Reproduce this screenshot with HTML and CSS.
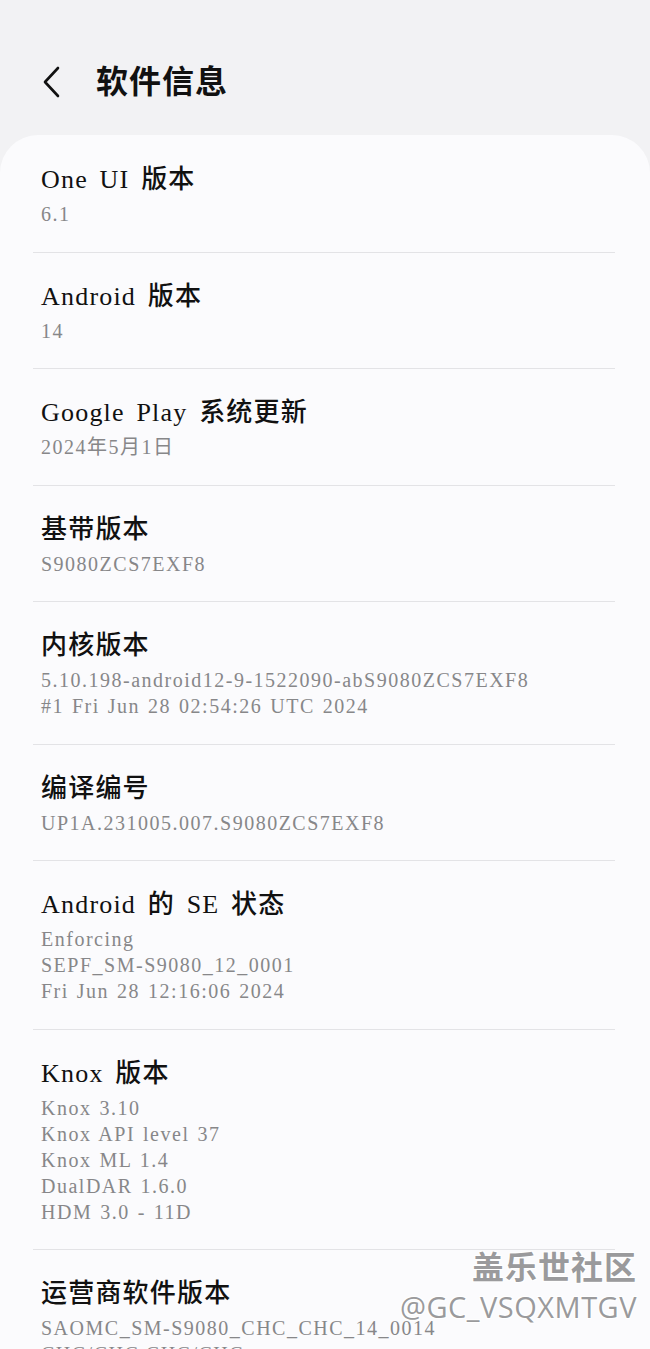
FILE: index.html
```html
<!doctype html>
<html>
<head>
    <meta charset="utf-8">
    <title>软件信息</title>
    <link rel="stylesheet" href="styles.css">
</head>
<body>
    <div class="page">
        <div class="header">
            <svg class="back" width="24" height="34" viewBox="0 0 24 34">
                <path d="M18 3 L5 17 L18 31" fill="none" stroke="#111" stroke-width="2.6" stroke-linecap="round" stroke-linejoin="round"/>
            </svg>
            <h1>软件信息</h1>
        </div>
        <ul class="card">
            <li>
                <p class="name">One UI 版本</p>
                <p class="val">6.1</p>
            </li>
            <li>
                <p class="name">Android 版本</p>
                <p class="val">14</p>
            </li>
            <li>
                <p class="name">Google Play 系统更新</p>
                <p class="val">2024年5月1日</p>
            </li>
            <li>
                <p class="name">基带版本</p>
                <p class="val">S9080ZCS7EXF8</p>
            </li>
            <li>
                <p class="name">内核版本</p>
                <p class="val">5.10.198-android12-9-1522090-abS9080ZCS7EXF8</p>
                <p class="val">#1 Fri Jun 28 02:54:26 UTC 2024</p>
            </li>
            <li>
                <p class="name">编译编号</p>
                <p class="val">UP1A.231005.007.S9080ZCS7EXF8</p>
            </li>
            <li>
                <p class="name">Android 的 SE 状态</p>
                <p class="val">Enforcing</p>
                <p class="val">SEPF_SM-S9080_12_0001</p>
                <p class="val">Fri Jun 28 12:16:06 2024</p>
            </li>
            <li>
                <p class="name">Knox 版本</p>
                <p class="val">Knox 3.10</p>
                <p class="val">Knox API level 37</p>
                <p class="val">Knox ML 1.4</p>
                <p class="val">DualDAR 1.6.0</p>
                <p class="val">HDM 3.0 - 11D</p>
            </li>
            <li>
                <p class="name">运营商软件版本</p>
                <p class="val">SAOMC_SM-S9080_CHC_CHC_14_0014</p>
                <p class="val">CHC/CHC,CHC/CHC</p>
            </li>
        </ul>
        <div class="mark">
            <p class="mark-cn">盖乐世社区</p>
            <p class="mark-id">@GC_VSQXMTGV</p>
        </div>
    </div>
</body>
</html>
```

FILE: styles.css
```css
*{margin:0; padding:0;}
ul{list-style:none;}

html,body{
    background:#f2f2f4;
    overflow:hidden;
}
body{
    font-family:"Liberation Serif","Noto Sans CJK SC",serif;
    color:#111;
}
.page{
    position:relative;
    width:650px;
    height:1349px;
    overflow:hidden;
}

.header{
    display:flex;
    align-items:center;
    height:135px;
    padding:28px 0 0 40px;
    box-sizing:border-box;
}
.header .back{
    margin-right:32px;
}
.header h1{
    font-size:32px;
    font-weight:bold;
    line-height:40px;
    letter-spacing:1px;
}

.card{
    background:#fbfbfd;
    border-radius:38px 38px 0 0;
    padding:1px 35px 0 33px;
}
.card li{
    padding:26px 0 24.5px 8px;
    border-bottom:1px solid #e3e3e6;
}
.card li:last-child{
    border-bottom:none;
}
.card .name{
    font-size:26px;
    font-weight:500;
    line-height:36px;
    letter-spacing:1.2px;
    word-spacing:4px;
    margin-bottom:3px;
    white-space:nowrap;
}
.card .val{
    font-size:20px;
    line-height:26px;
    letter-spacing:1.5px;
    word-spacing:1.5px;
    color:#878789;
    white-space:nowrap;
}

.mark{
    position:absolute;
    right:13px;
    top:1245px;
    text-align:right;
    font-family:"Noto Sans CJK SC","Noto Sans",sans-serif;
    color:#9a9a9c;
    text-shadow:1px 1px 0 #fff, -1px -1px 0 #fff, 1px -1px 0 #fff, -1px 1px 0 #fff;
}
.mark-cn{
    font-size:32px;
    font-weight:bold;
    line-height:40px;
    letter-spacing:1px;
}
.mark-id{
    font-family:"Open Sans","Noto Sans",sans-serif;
    font-size:29px;
    line-height:44px;
    letter-spacing:0.5px;
}
```
